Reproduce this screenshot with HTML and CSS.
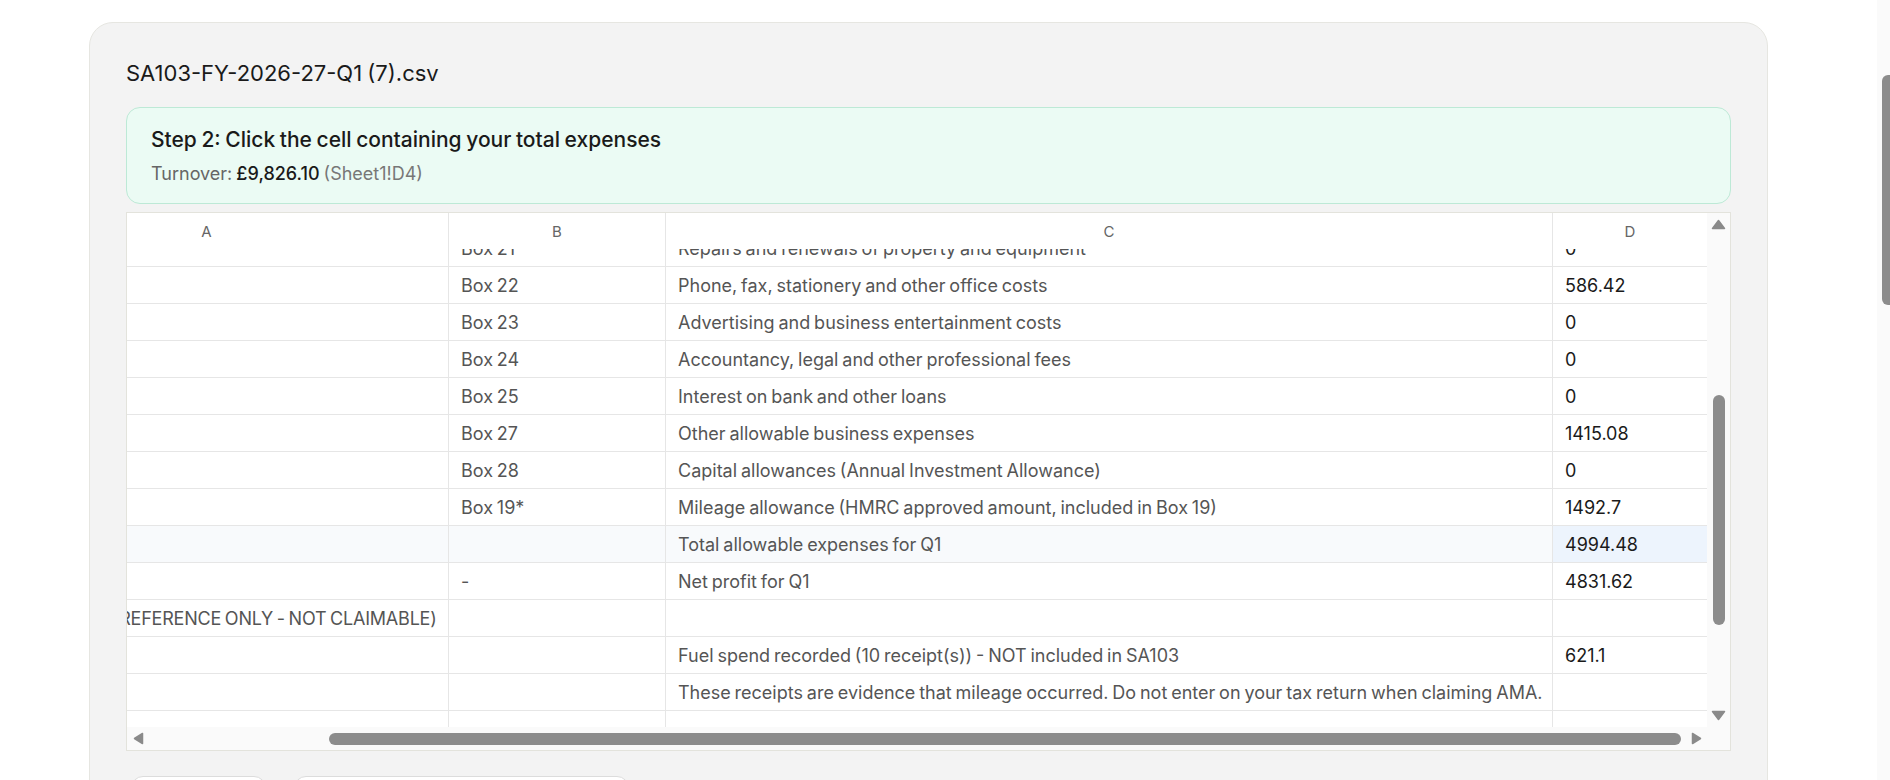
FILE: index.html
```html
<!DOCTYPE html>
<html lang="en">
<head>
    <meta charset="UTF-8">
    <meta name="viewport" content="width=device-width, initial-scale=1.0">
    <title>Import SA103 spreadsheet</title>
    <link rel="stylesheet" href="styles.css">
</head>
<body>

<div class="page">
    <main class="card">
        <h3 class="file-name">SA103-FY-2026-27-Q1 (7).csv</h3>

        <div class="step-box">
            <div class="step-title">Step 2: Click the cell containing your total expenses</div>
            <div class="step-meta">
                Turnover: <span class="step-value">£9,826.10</span> <span class="step-ref">(Sheet1!D4)</span>
            </div>
        </div>

        <div class="grid-wrap">
            <div class="grid-scroll" id="grid">
                <table class="grid">
                    <colgroup>
                        <col class="col-a">
                        <col class="col-b">
                        <col class="col-c">
                        <col class="col-d">
                    </colgroup>
                    <thead>
                        <tr>
                            <th>A</th>
                            <th>B</th>
                            <th>C</th>
                            <th>D</th>
                        </tr>
                    </thead>
                    <tbody>
                        <tr><td></td><td>Box 21</td><td>Repairs and renewals of property and equipment</td><td class="num">0</td></tr>
                        <tr><td></td><td>Box 22</td><td>Phone, fax, stationery and other office costs</td><td class="num">586.42</td></tr>
                        <tr><td></td><td>Box 23</td><td>Advertising and business entertainment costs</td><td class="num">0</td></tr>
                        <tr><td></td><td>Box 24</td><td>Accountancy, legal and other professional fees</td><td class="num">0</td></tr>
                        <tr><td></td><td>Box 25</td><td>Interest on bank and other loans</td><td class="num">0</td></tr>
                        <tr><td></td><td>Box 27</td><td>Other allowable business expenses</td><td class="num">1415.08</td></tr>
                        <tr><td></td><td>Box 28</td><td>Capital allowances (Annual Investment Allowance)</td><td class="num">0</td></tr>
                        <tr><td></td><td>Box 19*</td><td>Mileage allowance (HMRC approved amount, included in Box 19)</td><td class="num">1492.7</td></tr>
                        <tr class="row-hover"><td></td><td></td><td>Total allowable expenses for Q1</td><td class="num cell-hover">4994.48</td></tr>
                        <tr><td></td><td>-</td><td>Net profit for Q1</td><td class="num">4831.62</td></tr>
                        <tr><td class="label">FUEL RECEIPTS (REFERENCE ONLY - NOT CLAIMABLE)</td><td></td><td></td><td></td></tr>
                        <tr><td></td><td></td><td>Fuel spend recorded (10 receipt(s)) - NOT included in SA103</td><td class="num">621.1</td></tr>
                        <tr><td></td><td></td><td>These receipts are evidence that mileage occurred. Do not enter on your tax return when claiming AMA.</td><td></td></tr>
                        <tr><td></td><td></td><td></td><td></td></tr>
                    </tbody>
                </table>
            </div>

            <div class="vbar">
                <svg class="arrow" width="15" height="11" viewBox="0 0 15 11"><path d="M7.5 1.5 L13.5 9.5 H1.5 Z"/></svg>
                <div class="vthumb"></div>
                <svg class="arrow arrow-end" width="15" height="11" viewBox="0 0 15 11"><path d="M1.5 1.5 H13.5 L7.5 9.5 Z"/></svg>
            </div>
            <div class="hbar">
                <svg class="arrow" width="11" height="13" viewBox="0 0 11 13"><path d="M9.5 1.5 V11.5 L1.5 6.5 Z"/></svg>
                <div class="hthumb"></div>
                <svg class="arrow arrow-end" width="11" height="13" viewBox="0 0 11 13"><path d="M1.5 1.5 V11.5 L9.5 6.5 Z"/></svg>
            </div>
            <div class="corner"></div>
        </div>

        <div class="actions">
            <button class="btn btn-back">Back</button>
            <button class="btn btn-skip">Use turnover only and skip</button>
        </div>
    </main>
</div>

<div class="page-bar"><div class="page-thumb"></div></div>

<script src="app.js"></script>
</body>
</html>
```

FILE: styles.css
```css
body {
    margin: 0;
    font-family: Inter, 'Noto Sans', sans-serif;
    word-spacing: -1px;
    background-color: #fff;
    color: #1a1a1a;
}

.page {
    padding: 22px 0 40px 89px;
}

.card {
    display: block;
    width: 1679px;
    box-sizing: border-box;
    padding: 36px 36px 36px;
    background-color: #f3f3f3;
    border: 1px solid #e6e6e1;
    border-radius: 24px;
}

.file-name {
    margin: 0 0 20px;
    font-size: 22px;
    line-height: 28px;
    font-weight: 400;
    color: #1a1a1a;
}

.step-box {
    padding: 18px 24px 17px;
    background-color: #ebfbf4;
    border: 1px solid #bde9d6;
    border-radius: 14px;
}

.step-title {
    font-size: 21px;
    line-height: 28px;
    font-weight: 500;
    color: #1a1a1a;
    margin-bottom: 8px;
}

.step-meta {
    font-size: 18px;
    line-height: 24px;
    color: #666;
}

.step-value {
    color: #1a1a1a;
    font-weight: 500;
}

.step-ref {
    color: #777;
}

/* spreadsheet preview with its own scrollbars */
.grid-wrap {
    margin-top: 8px;
    display: grid;
    grid-template-columns: 1fr 23px;
    grid-template-rows: 514px 23px;
    border: 1px solid #e3e3dc;
    background-color: #fff;
}

.grid-scroll {
    overflow: hidden;
}

.grid {
    table-layout: fixed;
    width: 1743px;
    border-collapse: separate;
    border-spacing: 0;
    font-size: 18px;
}

.col-a { width: 484px; }
.col-b { width: 217px; }
.col-c { width: 887px; }
.col-d { width: 155px; }

.grid th {
    position: sticky;
    top: 0;
    z-index: 1;
    height: 36px;
    padding: 0;
    background-color: #fff;
    border-right: 1px solid #e6e6e6;
    font-size: 15px;
    font-weight: 400;
    color: #666;
    text-align: center;
}

.grid td {
    height: 36px;
    padding: 0 12px;
    border-right: 1px solid #e6e6e6;
    border-bottom: 1px solid #e6e6e6;
    color: #555;
    word-spacing: -1.2px;
    white-space: nowrap;
    overflow: hidden;
}

.grid td.label {
    letter-spacing: -0.2px;
}

.grid td.num {
    color: #1a1a1a;
}

.grid tr.row-hover td {
    background-color: #f8fafc;
}

.grid tr.row-hover td.cell-hover {
    background-color: #edf4fd;
}

.vbar, .hbar, .corner {
    background-color: #fafafa;
}

.vbar {
    display: flex;
    flex-direction: column;
    align-items: center;
    padding: 6px 0;
}

.hbar {
    display: flex;
    align-items: center;
    padding: 0 5px 0 6px;
}

.arrow path {
    fill: #8a8a8a;
    stroke: #8a8a8a;
    stroke-width: 1.5;
    stroke-linejoin: round;
}

.vbar .arrow-end {
    margin-top: auto;
}

.hbar .arrow-end {
    margin-left: auto;
}

.vthumb {
    width: 12px;
    height: 230px;
    margin-top: 165px;
    background-color: #8c8c8c;
    border-radius: 6px;
}

.hthumb {
    width: 1352px;
    height: 12px;
    margin-left: 185px;
    background-color: #8c8c8c;
    border-radius: 6px;
}

.actions {
    display: flex;
    gap: 28px;
    margin-top: 25px;
    padding-left: 5px;
}

.btn {
    font-family: inherit;
    font-size: 16px;
    padding: 12px 0;
    background-color: #fff;
    border: 1px solid #dcdcdc;
    border-radius: 12px;
    color: #1a1a1a;
    cursor: pointer;
}

.btn-back { width: 135px; }
.btn-skip { width: 335px; }

.page-bar {
    position: fixed;
    top: 0;
    right: 0;
    width: 13px;
    height: 100vh;
    background-color: #fafafa;
}

.page-thumb {
    width: 8px;
    height: 230px;
    margin: 75px 0 0 5px;
    background-color: #8c8c8c;
    border-radius: 6px 0 0 6px;
}
```

FILE: app.js
```js
const grid = document.getElementById("grid");
grid.scrollTop = 19;
grid.scrollLeft = 162;
```
